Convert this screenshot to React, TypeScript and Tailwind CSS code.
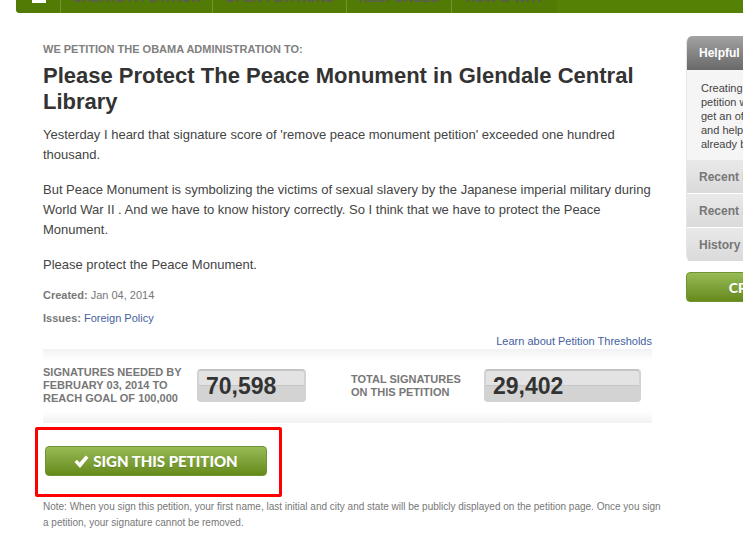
import React from "react";

type CounterProps = {
  value: string;
  className: string;
};

const navItems = [
  {label: "CREATE A PETITION", className: "w-[152px] border-r"},
  {label: "OPEN PETITIONS", className: "w-[134px] border-r"},
  {label: "RESPONSES", className: "w-[105px] border-r"},
  {label: "HOW & WHY", className: "w-[105px]"},
];

const helpSections = ["Recent Petitions", "Recent Signatures", "History"];

const NavBar: React.FC = () => (
  <nav className="ml-4 flex h-[13px] items-end overflow-hidden rounded-bl bg-[#558204]">
    <div className="flex h-10 shrink-0 bg-[#517b05]">
      <a href="#home" aria-label="Home" className="flex h-full w-[45px] items-start border-r border-[#709530] pl-4">
        <svg viewBox="0 0 14 18" className="mt-3 h-[18px] w-[14px]" fill="#fff">
          <path d="M7 0 14 7v11H0V7z" />
        </svg>
      </a>
      {navItems.map((item) => (
        <a
          key={item.label}
          href="#nav"
          className={`${item.className} flex h-full items-start justify-center border-[#709530] pt-[17px] text-[13px] leading-4 font-bold whitespace-nowrap text-[#5c5a55]`}
        >
          {item.label}
        </a>
      ))}
    </div>
  </nav>
);

const Counter: React.FC<CounterProps> = ({value, className}) => (
  <div
    className={`${className} h-[33px] rounded border-2 border-[#d2d2d2] border-t-[#c4c4c4] bg-[linear-gradient(#e3e3e3_48%,#c6c6c6_48%,#c6c6c6_53%,#d3d3d3_53%)] pl-[7px] text-[23px] leading-[30px] font-bold text-[#333]`}
  >
    {value}
  </div>
);

const Stats: React.FC = () => (
  <section className="flex h-[74px] items-start bg-[linear-gradient(#f2f2f2,#fff_12px,#fff_62px,#f2f2f2)] pt-5 text-[11px] leading-[13px] font-bold text-[#777]">
    <p className="-mt-[3px] w-[154px] shrink-0 whitespace-nowrap">
      SIGNATURES NEEDED BY
      <br />
      FEBRUARY 03, 2014 TO
      <br />
      REACH GOAL OF 100,000
    </p>
    <Counter value="70,598" className="w-[109px]" />
    <p className="ml-[45px] w-[133px] shrink-0 pt-1 whitespace-nowrap">
      TOTAL SIGNATURES
      <br />
      ON THIS PETITION
    </p>
    <Counter value="29,402" className="w-[157px]" />
  </section>
);

const Petition: React.FC = () => (
  <main className="min-w-0 flex-1 pt-7">
    <div className="pr-3.5">
      <p className="text-[11px] leading-4 font-bold text-[#808080]">WE PETITION THE OBAMA ADMINISTRATION TO:</p>
      <h1 className="mt-1.5 text-[22px] leading-[26px] font-bold text-[#333]">
        Please Protect The Peace Monument in Glendale Central Library
      </h1>
      <div className="mt-2.5 space-y-[15px] text-[13px] leading-5 text-[#444]">
        <p>
          Yesterday I heard that signature score of 'remove peace monument petition' exceeded one hundred thousand.
        </p>
        <p>
          But Peace Monument is symbolizing the victims of sexual slavery by the Japanese imperial military during
          World War II . And we have to know history correctly. So I think that we have to protect the Peace Monument.
        </p>
        <p>Please protect the Peace Monument.</p>
      </div>
      <div className="mt-3 space-y-[7px] text-[11px] leading-4 text-[#777]">
        <p>
          <b>Created:</b> Jan 04, 2014
        </p>
        <p>
          <b>Issues:</b>{" "}
          <a href="#foreign-policy" className="text-[#44619d]">
            Foreign Policy
          </a>
        </p>
      </div>
      <p className="mt-[7px] text-right text-[11px] leading-4">
        <a href="#thresholds" className="text-[#44619d]">
          Learn about Petition Thresholds
        </a>
      </p>
      <Stats />
    </div>
    <div className="mt-1 -ml-2 w-fit rounded-xs border-[3px] border-[#fe0000] pt-4 pr-3 pb-[18px] pl-[7px]">
      <button className="flex h-[30px] w-[222px] items-center justify-center gap-1 rounded border border-[#6f9433] bg-linear-to-b from-[#98bb55] to-[#668a18] font-[Lato] text-[15px] font-black text-white text-shadow-2xs">
        <svg viewBox="0 0 15 13" className="h-[13px] w-[15px]" fill="#fff">
          <path d="M0.5 7 3 4.8 5.6 7.4 11.8 0.5 14.5 2.8 6 13z" />
        </svg>
        SIGN THIS PETITION
      </button>
    </div>
    <p className="mt-0.5 text-[10px] leading-4 text-[#777]">
      Note: When you sign this petition, your first name, last initial and city and state will be publicly displayed on
      the petition page. Once you sign a petition, your signature cannot be removed.
    </p>
  </main>
);

const Sidebar: React.FC = () => (
  <aside className="w-[217px] shrink-0 pt-[23px]">
    <div className="overflow-hidden rounded-md border-l border-[#e6e6e6]">
      <h2 className="h-[34px] bg-linear-to-b from-[#a3a3a3] to-[#696969] pl-3 text-[12px] leading-[34px] font-bold text-white">
        Helpful Hints
      </h2>
      <p className="h-[90px] bg-[#f5f5f5] pt-[11px] pl-3.5 text-[11px] leading-[14px] whitespace-nowrap text-[#444]">
        Creating a new
        <br />
        petition will
        <br />
        get an official
        <br />
        and helps
        <br />
        already been
      </p>
      {helpSections.map((title) => (
        <h2
          key={title}
          className="h-[34px] border-b border-white bg-linear-to-b from-[#e9e9e9] to-[#dadada] pl-3 text-[12px] leading-[34px] font-bold text-[#777]"
        >
          {title}
        </h2>
      ))}
    </div>
    <button className="mt-2.5 h-[30px] w-full rounded border border-[#6f9433] bg-linear-to-b from-[#98bb55] to-[#668a18] font-[Lato] text-[14px] font-black text-white text-shadow-2xs">
      CREATE A PETITION
    </button>
  </aside>
);

const App: React.FC = () => {
  return (
    <div className="min-h-screen overflow-hidden bg-white font-['Liberation_Sans',Arial,sans-serif]">
      <NavBar />
      {/* the sidebar runs past the right edge of the window */}
      <div className="-mr-40 ml-[43px] flex gap-5">
        <Petition />
        <Sidebar />
      </div>
    </div>
  );
};

export default App;
